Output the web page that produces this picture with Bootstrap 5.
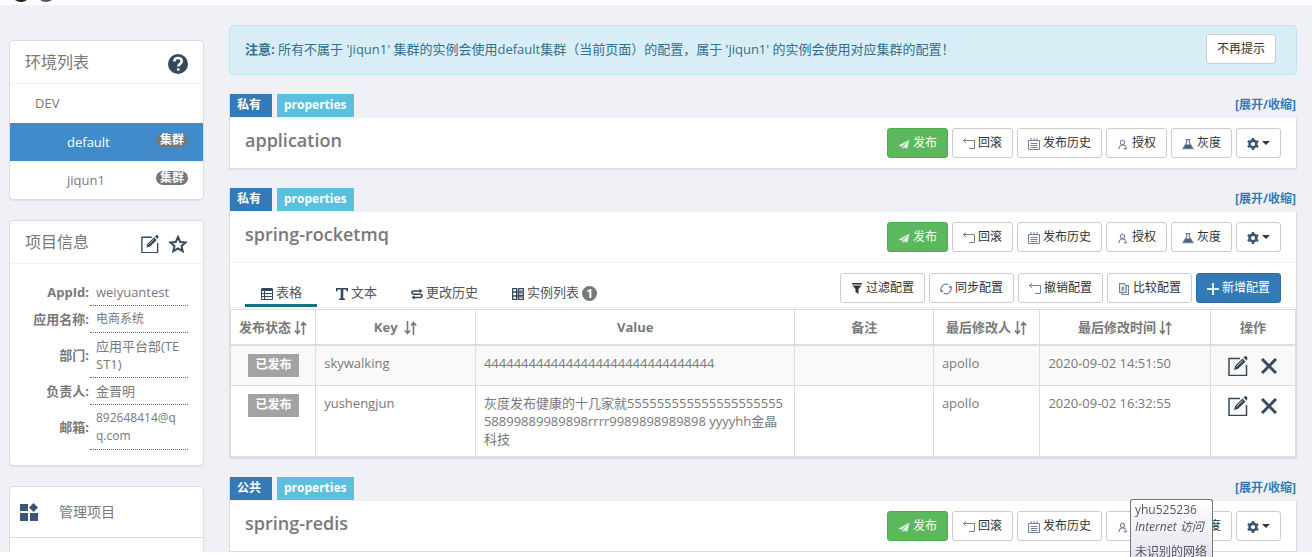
<!DOCTYPE html>
<html lang="zh-CN">
<head>
<meta charset="utf-8">
<meta name="viewport" content="width=device-width, initial-scale=1">
<title>spring-rocketmq - 配置中心</title>
<link href="https://cdn.jsdelivr.net/npm/bootstrap@5.3.0/dist/css/bootstrap.min.css" rel="stylesheet">
<style>
  body { font-family: "Open Sans", "Noto Sans CJK SC", sans-serif; font-size: 13px; line-height: 18px; color: #797979; background: #fff; }
  a { color: #337ab7; text-decoration: none; }
  .topbar { height: 5px; background: #fff; }
  .topbar svg { display: block; margin-left: 12px; }
  .bottombar { height: 5px; background: #fff; }
  .workspace { display: grid; grid-template-columns: 195px minmax(0, 1fr); column-gap: 25px; padding: 0 15px 0 9px; background: #f0f1f7; min-height: 0; }
  .sidebar { padding-top: 35px; display: grid; row-gap: 20px; align-content: start; }
  .content { padding-top: 20px; }
  .box { background: #fff; border: 1px solid #ddd; border-radius: 4px; box-shadow: 0 1px 1px rgba(0,0,0,.06); overflow: hidden; }
  .box-head { height: 43px; padding: 0 15px; border-bottom: 1px solid #eff2f7; }
  .box-head h2 { font-size: 16px; line-height: 22px; font-weight: 400; margin: 0; }
  .icon-btn { border: 0; background: none; padding: 0; line-height: 0; color: #34495e; }
  .env a { display: flex; align-items: center; justify-content: space-between; height: 38px; padding: 0 15px 0 57px; color: #797979; border-top: 1px solid #f3f5f8; }
  .env a.env-root { height: 39px; padding-left: 25px; border-top: 0; }
  .env a.current { background: #428bca; border-color: #428bca; color: #fff; }
  .pill { background: #777; color: #fff; font-size: 12px; line-height: 14px; font-weight: 700; border-radius: 7px; padding: 0 4px; margin-bottom: 4px; }
  .info { margin: 15px; width: 163px; table-layout: fixed; }
  .info th { width: 65px; text-align: right; padding-right: 1px; font-weight: 700; white-space: nowrap; }
  .info td { border-bottom: 1px dotted #666; padding: 4px 6px; word-break: break-all; }
  .text-12 { font-size: 12px; }
  .text-14 { font-size: 14px; }
  .tool { display: flex; align-items: center; height: 51px; padding-left: 10px; color: #797979; border-bottom: 1px solid #ddd; gap: 21px; }
  .notice { background: #d9edf7; border: 1px solid #bce8f1; color: #31708f; border-radius: 4px; height: 50px; padding: 0 20px 2px 15px; margin-bottom: 19px; }
  .ns { border: 1px solid #ddd; border-top: 0; background: #fff; box-shadow: 0 1px 1px rgba(0,0,0,.06); margin-bottom: 19px; }
  .ns-tags { height: 24px; background: #f0f1f7; margin-right: -1px; padding-right: 1px; }
  .ns-labels { display: flex; gap: 5px; }
  .tag { display: block; color: #fff; font-size: 12px; line-height: 21px; height: 23px; font-weight: 700; padding: 0 7px; }
  .tag-kind { background: #337ab7; padding-right: 11px; }
  .tag-type { background: #5bc0de; line-height: 22px; }
  .toggle { font-size: 12px; font-weight: 700; line-height: 21px; }
  .ns-head { height: 50px; padding: 0 15px; }
  .ns-head h3 { font-size: 18px; line-height: 24px; font-weight: 600; margin: 0 0 6px; }
  .ns-tabs { height: 46px; padding: 0 15px; border-top: 1px solid #eff2f7; border-bottom: 1px solid #eee; margin-bottom: 1px; }
  .btn-c { --bs-btn-padding-x: 10px; --bs-btn-padding-y: 5px; --bs-btn-font-size: 12px; --bs-btn-line-height: 18px; --bs-btn-border-radius: 3px; --bs-btn-bg: #fff; --bs-btn-color: #333; --bs-btn-border-color: #ccc; --bs-btn-hover-bg: #e6e6e6; --bs-btn-hover-border-color: #adadad; display: inline-flex; align-items: center; gap: 3px; height: 30px; white-space: nowrap; }
  .btn-c svg { margin-top: 3px; color: #73829a; }
  .btn-c.go { --bs-btn-bg: #5cb85c; --bs-btn-color: #fff; --bs-btn-border-color: #4cae4c; }
  .btn-c.add { --bs-btn-bg: #337ab7; --bs-btn-color: #fff; --bs-btn-border-color: #2e6da4; }
  .btn-c.go svg, .btn-c.add svg { color: #dfeee6; }
  .btn-c.gear { width: 45px; }
  .btn-c.gear svg { color: #3b5575; margin-top: 2px; }
  .btn-c.gear::after { margin-left: 0; border-top-width: 4px; border-left-width: 4px; border-right-width: 4px; }
  .group { display: flex; gap: 4px; }
  .tab-c { display: flex; align-items: center; gap: 3px; height: 27px; padding: 0 15px 0 16px; color: #555; border-bottom: 3px solid transparent; }
  .tab-c svg { margin-top: 4px; color: #34495e; }
  .tab-c.active { border-color: #1b6d85; }
  .ns-tabs nav { gap: 3px; }
  .count { background: #777; color: #fff; border-radius: 50%; width: 15px; height: 15px; font-size: 12px; line-height: 15px; font-weight: 700; text-align: center; margin-top: 4px; }
  .grid-c { table-layout: fixed; margin: 0; color: #797979; --bs-table-color: #797979; border: 1px solid #ddd; }
  .grid-c > :not(caption) > * > * { padding: 8px; border: 1px solid #ddd; color: #797979; background: #fff; box-shadow: none; }
  .grid-c > thead > tr > th { text-align: center; border-bottom: 2px solid #ddd; font-weight: 700; white-space: nowrap; }
  .grid-c > tbody > tr:first-child > td { background: #f9f9f9; }
  .grid-c td { word-break: break-all; }
  .grid-c > tbody > tr > td.tight { padding-top: 8px; padding-bottom: 8px; text-align: center; }
  .grid-c > tbody > tr > td.acts { padding: 10px 8px 8px; }
  .acts > div { gap: 13px; }
  .state { display: inline-block; background: #a3a3a3; color: #fff; font-weight: 700; font-size: 12px; line-height: 22px; height: 23px; padding: 0 7px 0 8px; vertical-align: top; }
  .net-tip { position: fixed; right: 99px; bottom: 0; width: 83px; height: 58px; padding: 1px 4px; overflow: hidden; white-space: nowrap; font-size: 12px; color: #575757; background: linear-gradient(#fff, #e4e5f0); border: 1px solid #767676; border-bottom: 0; border-radius: 3px 3px 0 0; line-height: 17px; }
</style>
</head>
<body class="vh-100 d-flex flex-column overflow-hidden">
<svg class="d-none" aria-hidden="true">
  <symbol id="plane" viewBox="0 0 12 12"><path fill="currentColor" d="M11.500 1.500 .5 7.500l3 1.200zM11.500 1.500 4.500 9v2l1.800-1.500 3 1.200z"/></symbol>
  <symbol id="undo" viewBox="0 0 12 12"><path fill="none" stroke="currentColor" d="M3 .5.5 2.500 3 5M.5 2.500H11.500V10.500H6"/></symbol>
  <symbol id="cal" viewBox="0 0 12 12"><path fill="none" stroke="currentColor" d="M.5 2.500h11v9H.5zM3 0v3M6 0v3M9 0v3M2.500 5.500h7M2.500 7.500h7M2.500 9.500h7"/></symbol>
  <symbol id="user" viewBox="0 0 12 12"><path fill="none" stroke="currentColor" stroke-width="1.200" d="M5.500 2a2.300 2.400 0 0 1 1.200 4.300L5.500 7 4.300 6.300A2.300 2.400 0 0 1 5.500 2M4.500 6.800C2.500 8 2 9.500 1.800 11M6.500 7l2.500 1.500M7 10l1.300 1L10 9.500"/></symbol>
  <symbol id="flask" viewBox="0 0 12 12"><path fill="none" stroke="currentColor" stroke-width="1.200" d="M3.500 1.600h5M4.700 1.600v3L1 10.700h10L7.300 4.600v-3"/><path fill="#4b5d78" d="M3.800 6.500h4.400l2 3.500H1.800z"/></symbol>
  <symbol id="gear" viewBox="0 0 12 12"><path fill="none" stroke="currentColor" stroke-width="2.600" d="M6 2.600a3.400 3.400 0 1 1 0 6.800 3.400 3.400 0 0 1 0-6.800"/><path stroke="currentColor" stroke-width="2.400" d="M6 0v2M6 10v2M.8 3l1.700 1M9.500 8l1.700 1M.8 9l1.700-1M9.500 4l1.700-1"/></symbol>
  <symbol id="filter" viewBox="0 0 12 12"><path fill="#333" d="M1 0h10v1.500H1zM1.500 2.500h9L7.500 6v5L4.500 9V6z"/></symbol>
  <symbol id="sync" viewBox="0 0 12 12"><path fill="none" stroke="currentColor" stroke-width="1.200" d="M1.500 8.500a5 5 0 0 1 7-6.500M10.500 3.500a5 5 0 0 1-7 6.500M0 7l1.500 1.700L3.200 7.500M12 5l-1.500-1.700L8.800 4.500"/></symbol>
  <symbol id="diff" viewBox="0 0 12 12"><path fill="none" stroke="currentColor" stroke-width="1.200" d="M1.600.6H6l2 2v6.800H1.600zM8 2.500h2.400v9H4V9.500M3.200 5h3.200M3.200 7h3.200M4.800 3.300v3.300"/></symbol>
  <symbol id="plus" viewBox="0 0 12 12"><path stroke="currentColor" stroke-width="2" d="M6 0v12M0 6h12"/></symbol>
  <symbol id="grid" viewBox="0 0 12 12"><path fill="none" stroke="currentColor" d="M.5 1.500h11v10H.5zM3.500 3v8M1 5.500h10M1 8.500h10"/><path fill="currentColor" d="M1 0h10l1 1v2H0V1z"/></symbol>
  <symbol id="type" viewBox="0 0 12 12"><path fill="currentColor" d="M0 0h12v3.500h-1L10 1.500H7.300V10l1.700 1v1H3v-1l1.700-1V1.500H2L1 3.500H0z"/></symbol>
  <symbol id="swap" viewBox="0 0 12 12"><path fill="none" stroke="currentColor" stroke-width="1.600" d="M9.500 3H3Q1 3 1 4.600T3 6.200h6Q11 6.200 11 7.800T9 9.500H2.500"/><path fill="currentColor" d="m8.500.8 3 2.200-3 2.200zM3.500 7.300l-3 2.200 3 2.200z"/></symbol>
  <symbol id="servers" viewBox="0 0 12 12"><path fill="none" stroke="currentColor" stroke-width="1.300" d="M.6.6h4v10.800h-4zM6.500.7h5v2.500h-5zM6.500 4.800h5v2.500h-5zM6.500 8.900h5v2.500h-5zM1 4h5.500M1 8h5.500"/></symbol>
  <symbol id="edit" viewBox="0 0 20 20"><path fill="none" stroke="currentColor" stroke-width="1.500" d="M12 2.500H1v17h17.500V9"/><path fill="currentColor" d="m6 14 1.200-4.200L14.500 2.500l3 3L10.200 12.800zM15.500 1.600 16.800.4q1-.7 2 .3t.5 2.200L18.400 4.400z"/><path stroke="#fff" stroke-width=".7" d="m8.500 10.500 6-6"/></symbol>
  <symbol id="cross" viewBox="0 0 16 16"><path stroke="currentColor" stroke-width="3" d="m1 1 14 14M15 1 1 15"/></symbol>
  <symbol id="sort" viewBox="0 0 13 14"><path fill="none" stroke="currentColor" stroke-width="1.600" d="M3.500 0v12M.8 9.500l2.700 3 2.500-3M9.500 14V1.500M7 4.500l2.500-3 2.700 3"/></symbol>
</svg>

<header class="topbar"><svg width="44" height="3" viewBox="0 0 44 3"><circle cx="9" cy="-8" r="10" fill="#222"/><circle cx="34" cy="-8" r="10" fill="#555"/></svg></header>

<div class="workspace flex-grow-1 overflow-hidden">
  <aside class="sidebar">
    <section class="box">
      <div class="box-head d-flex align-items-center justify-content-between">
        <h2>环境列表</h2>
        <button class="icon-btn mt-1" type="button" aria-label="帮助"><svg width="20" height="20" viewBox="0 0 20 20"><circle cx="10" cy="10" r="10" fill="currentColor"/><path d="M6.300 7.500C6.300 5 8 4 10 4s3.800 1.200 3.800 3.300c0 2.500-3.500 2.600-3.500 5.200M10.300 14.200v2.500" fill="none" stroke="#fff" stroke-width="2.600"/></svg></button>
      </div>
      <nav class="env">
        <a class="env-root" href="#">DEV</a>
        <a class="current" href="#">default <span class="pill">集群</span></a>
        <a href="#">jiqun1 <span class="pill">集群</span></a>
      </nav>
    </section>
    <section class="box">
      <div class="box-head d-flex align-items-center justify-content-between">
        <h2>项目信息</h2>
        <div class="d-flex gap-2 mt-1">
          <button class="icon-btn" type="button" aria-label="编辑项目"><svg width="20" height="18"><use href="#edit"/></svg></button>
          <button class="icon-btn" type="button" aria-label="收藏"><svg width="20" height="18" viewBox="0 0 20 18"><path d="m10 2 2.200 5 5.300.5-4 3.500 1.200 5.200L10 13.500l-4.700 2.700L6.500 11l-4-3.500L7.800 7z" fill="none" stroke="currentColor" stroke-width="2"/></svg></button>
        </div>
      </div>
      <table class="info">
        <tr><th scope="row">AppId:</th><td>weiyuantest</td></tr>
        <tr><th scope="row">应用名称:</th><td class="text-12">电商系统</td></tr>
        <tr><th scope="row">部门:</th><td>应用平台部(TEST1)</td></tr>
        <tr><th scope="row">负责人:</th><td>金晋明</td></tr>
        <tr><th scope="row">邮箱:</th><td class="text-12">892648414@qq.com</td></tr>
      </table>
    </section>
    <section class="box">
      <a class="tool" href="#"><svg width="18" height="18" viewBox="0 0 18 18" fill="#3b5575"><path d="M0 1h8v7H0zM0 10h8v8H0zM10 10h8v8h-8zM13.500 0 18 4.500 13.500 9 9 4.500z"/></svg><span class="text-14">管理项目</span></a>
      <a class="tool" href="#">&nbsp;</a>
    </section>
  </aside>

  <main class="content">
    <div class="notice d-flex align-items-center justify-content-between">
      <div><b>注意:</b> 所有不属于 'jiqun1' 集群的实例会使用default集群（当前页面）的配置，属于 'jiqun1' 的实例会使用对应集群的配置！</div>
      <button class="btn btn-c" type="button">不再提示</button>
    </div>

    <section class="ns">
      <div class="ns-tags d-flex justify-content-between">
        <div class="ns-labels"><span class="tag tag-kind">私有</span><span class="tag tag-type">properties</span></div>
        <a class="toggle" href="#">[展开/收缩]</a>
      </div>
      <div class="ns-head d-flex align-items-center justify-content-between">
        <h3>application</h3>
        <div class="group">
          <button class="btn btn-c go" type="button"><svg width="12" height="12"><use href="#plane"/></svg>发布</button>
          <button class="btn btn-c" type="button"><svg width="12" height="12"><use href="#undo"/></svg>回滚</button>
          <button class="btn btn-c" type="button"><svg width="12" height="12"><use href="#cal"/></svg>发布历史</button>
          <button class="btn btn-c" type="button"><svg width="12" height="12"><use href="#user"/></svg>授权</button>
          <button class="btn btn-c" type="button"><svg width="12" height="12"><use href="#flask"/></svg>灰度</button>
          <button class="btn btn-c gear dropdown-toggle" type="button" aria-label="设置"><svg width="12" height="12"><use href="#gear"/></svg></button>
        </div>
      </div>
    </section>

    <section class="ns">
      <div class="ns-tags d-flex justify-content-between">
        <div class="ns-labels"><span class="tag tag-kind">私有</span><span class="tag tag-type">properties</span></div>
        <a class="toggle" href="#">[展开/收缩]</a>
      </div>
      <div class="ns-head d-flex align-items-center justify-content-between">
        <h3>spring-rocketmq</h3>
        <div class="group">
          <button class="btn btn-c go" type="button"><svg width="12" height="12"><use href="#plane"/></svg>发布</button>
          <button class="btn btn-c" type="button"><svg width="12" height="12"><use href="#undo"/></svg>回滚</button>
          <button class="btn btn-c" type="button"><svg width="12" height="12"><use href="#cal"/></svg>发布历史</button>
          <button class="btn btn-c" type="button"><svg width="12" height="12"><use href="#user"/></svg>授权</button>
          <button class="btn btn-c" type="button"><svg width="12" height="12"><use href="#flask"/></svg>灰度</button>
          <button class="btn btn-c gear dropdown-toggle" type="button" aria-label="设置"><svg width="12" height="12"><use href="#gear"/></svg></button>
        </div>
      </div>
      <div class="ns-tabs d-flex justify-content-between">
        <nav class="d-flex align-items-end">
          <a class="tab-c active" href="#"><svg width="12" height="12"><use href="#grid"/></svg>表格</a>
          <a class="tab-c" href="#"><svg width="12" height="12"><use href="#type"/></svg>文本</a>
          <a class="tab-c" href="#"><svg width="12" height="12"><use href="#swap"/></svg>更改历史</a>
          <a class="tab-c" href="#"><svg width="12" height="12"><use href="#servers"/></svg>实例列表<span class="count">1</span></a>
        </nav>
        <div class="group align-items-end pb-1">
          <button class="btn btn-c" type="button"><svg width="12" height="12"><use href="#filter"/></svg>过滤配置</button>
          <button class="btn btn-c" type="button"><svg width="12" height="12"><use href="#sync"/></svg>同步配置</button>
          <button class="btn btn-c" type="button"><svg width="12" height="12"><use href="#undo"/></svg>撤销配置</button>
          <button class="btn btn-c" type="button"><svg width="12" height="12"><use href="#diff"/></svg>比较配置</button>
          <button class="btn btn-c add" type="button"><svg width="12" height="12"><use href="#plus"/></svg>新增配置</button>
        </div>
      </div>
      <table class="table grid-c">
        <colgroup><col style="width:8%"><col style="width:15%"><col style="width:30%"><col style="width:13%"><col style="width:10%"><col style="width:16%"><col style="width:8%"></colgroup>
        <thead>
          <tr>
            <th scope="col">发布状态 <svg width="13" height="14"><use href="#sort"/></svg></th>
            <th scope="col">Key&nbsp; <svg width="13" height="14"><use href="#sort"/></svg></th>
            <th scope="col">Value</th>
            <th scope="col">备注</th>
            <th scope="col">最后修改人 <svg width="13" height="14"><use href="#sort"/></svg></th>
            <th scope="col">最后修改时间 <svg width="13" height="14"><use href="#sort"/></svg></th>
            <th scope="col">操作</th>
          </tr>
        </thead>
        <tbody>
          <tr>
            <td class="tight"><span class="state">已发布</span></td>
            <td>skywalking</td>
            <td>4444444444444444444444444444444</td>
            <td></td>
            <td>apollo</td>
            <td>2020-09-02 14:51:50</td>
            <td class="acts"><div class="d-flex justify-content-center align-items-center"><button class="icon-btn" type="button" aria-label="修改"><svg width="20" height="20"><use href="#edit"/></svg></button><button class="icon-btn" type="button" aria-label="删除"><svg width="16" height="16"><use href="#cross"/></svg></button></div></td>
          </tr>
          <tr>
            <td class="tight"><span class="state">已发布</span></td>
            <td>yushengjun</td>
            <td>灰度发布健康的十几家就55555555555555555555558899889989898rrrr9989898989898 yyyyhh金晶科技</td>
            <td></td>
            <td>apollo</td>
            <td>2020-09-02 16:32:55</td>
            <td class="acts"><div class="d-flex justify-content-center align-items-center"><button class="icon-btn" type="button" aria-label="修改"><svg width="20" height="20"><use href="#edit"/></svg></button><button class="icon-btn" type="button" aria-label="删除"><svg width="16" height="16"><use href="#cross"/></svg></button></div></td>
          </tr>
        </tbody>
      </table>
    </section>

    <section class="ns">
      <div class="ns-tags d-flex justify-content-between">
        <div class="ns-labels"><span class="tag tag-kind">公共</span><span class="tag tag-type">properties</span></div>
        <a class="toggle" href="#">[展开/收缩]</a>
      </div>
      <div class="ns-head d-flex align-items-center justify-content-between">
        <h3>spring-redis</h3>
        <div class="group">
          <button class="btn btn-c go" type="button"><svg width="12" height="12"><use href="#plane"/></svg>发布</button>
          <button class="btn btn-c" type="button"><svg width="12" height="12"><use href="#undo"/></svg>回滚</button>
          <button class="btn btn-c" type="button"><svg width="12" height="12"><use href="#cal"/></svg>发布历史</button>
          <button class="btn btn-c" type="button"><svg width="12" height="12"><use href="#user"/></svg>授权</button>
          <button class="btn btn-c" type="button"><svg width="12" height="12"><use href="#flask"/></svg>灰度</button>
          <button class="btn btn-c gear dropdown-toggle" type="button" aria-label="设置"><svg width="12" height="12"><use href="#gear"/></svg></button>
        </div>
      </div>
    </section>
  </main>
</div>
<footer class="bottombar"></footer>

<div class="net-tip" role="tooltip">yhu525236<br><i>Internet 访问</i><div class="mt-2">未识别的网络</div></div>
<script src="https://cdn.jsdelivr.net/npm/bootstrap@5.3.0/dist/js/bootstrap.bundle.min.js"></script>
</body>
</html>
